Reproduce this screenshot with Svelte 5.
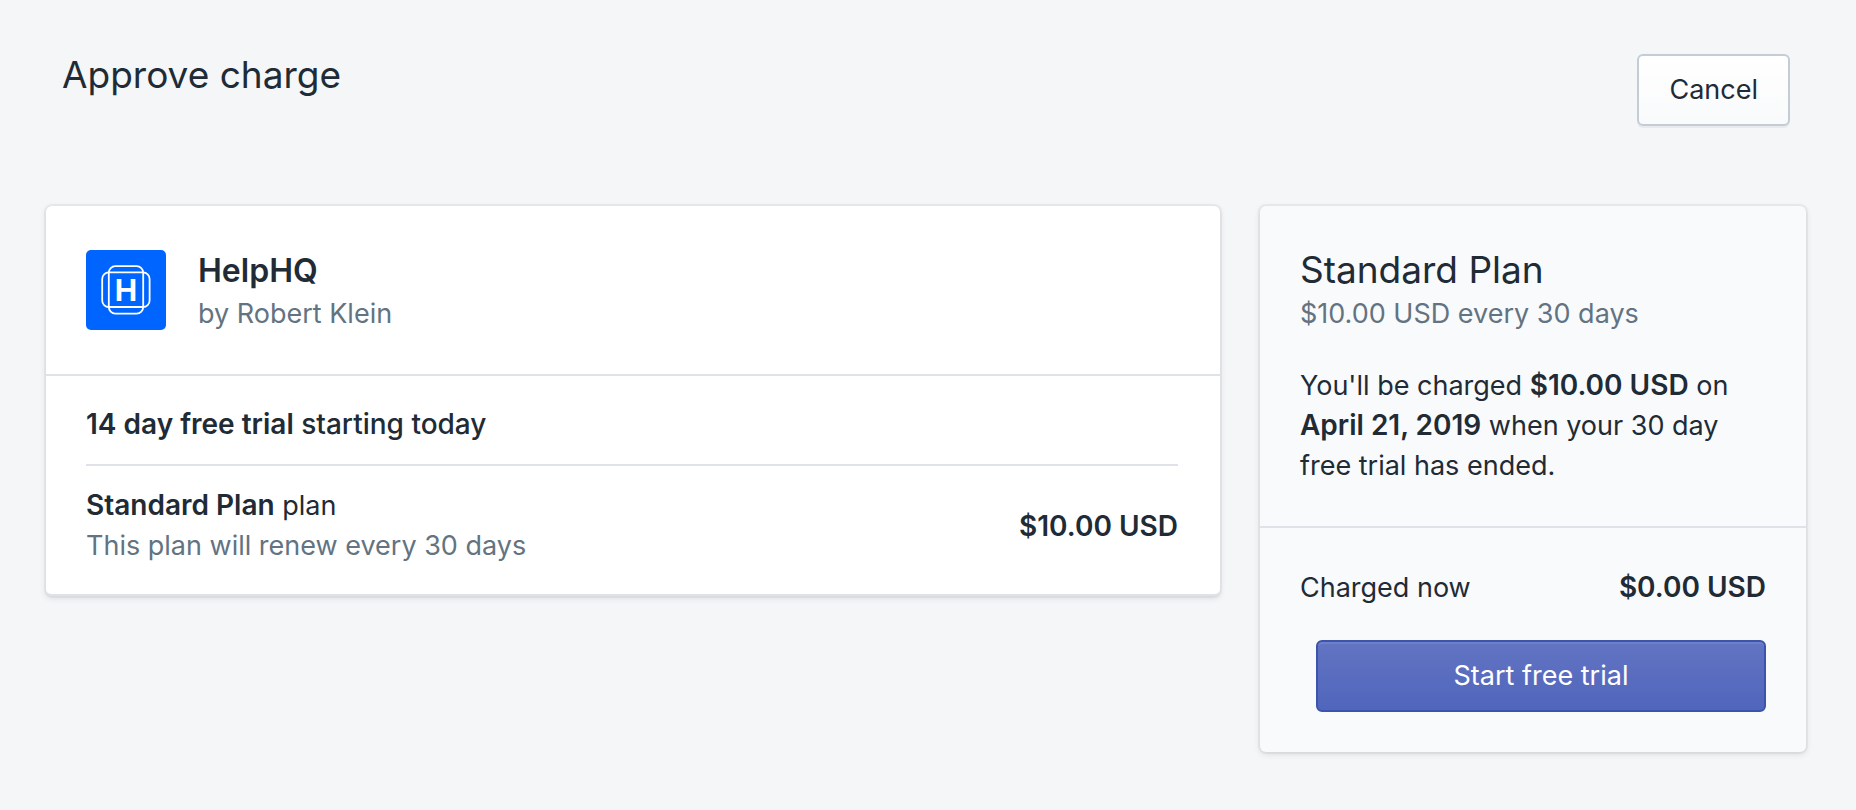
<script>
  const app = { name: 'HelpHQ', author: 'Robert Klein' };
  const plan = { name: 'Standard Plan', price: '$10.00 USD', days: 30 };
</script>

<main class="page">
  <header class="header">
    <h1 class="title">Approve charge</h1>
    <button type="button" class="button">Cancel</button>
  </header>

  <div class="layout">
    <section class="card primary">
      <div class="app">
        <svg class="logo" viewBox="0 0 80 80" aria-hidden="true">
          <rect width="80" height="80" rx="5" fill="#0064ff" />
          <g fill="none" stroke="#fff" stroke-width="1.8">
            <rect x="22.8" y="16.2" width="34.4" height="47.4" rx="6.5" />
            <rect x="16.2" y="22.4" width="47.4" height="34.6" rx="6.5" />
          </g>
          <text x="40" y="50.5" text-anchor="middle" fill="#fff">H</text>
        </svg>
        <div>
          <h2 class="app-name">{app.name}</h2>
          <p class="subdued">by {app.author}</p>
        </div>
      </div>
      <div class="details">
        <p class="trial"><strong>14 day free trial</strong> starting today</p>
        <div class="plan">
          <div>
            <p><strong>{plan.name}</strong> plan</p>
            <p class="subdued">This plan will renew every {plan.days} days</p>
          </div>
          <strong>{plan.price}</strong>
        </div>
      </div>
    </section>

    <aside class="card summary">
      <div class="section">
        <h2 class="title plan-name">{plan.name}</h2>
        <p class="subdued">{plan.price} every {plan.days} days</p>
        <p class="notice">
          You'll be charged <strong>{plan.price}</strong> on <strong>April 21, 2019</strong> when your {plan.days} day free trial has ended.
        </p>
      </div>
      <div class="section checkout">
        <div class="total">
          <span>Charged now</span>
          <strong>$0.00 USD</strong>
        </div>
        <button type="button" class="button start">Start free trial</button>
      </div>
    </aside>
  </div>
</main>

<style>
  :global(body) {
    margin: 0;
    background: #f4f6f8;
  }
  .page {
    padding: 54px 50px 58px 46px;
    color: #212b36;
    font: 400 27px/40px Inter, Roboto, sans-serif;
  }
  h1, h2, p {
    margin: 0;
  }
  strong {
    font-size: 28px;
    font-weight: 600;
    line-height: 28px;
  }
  .subdued {
    color: #637381;
  }
  .header {
    display: flex;
    justify-content: space-between;
    align-items: flex-start;
    padding: 0 16px;
    margin-bottom: 80px;
  }
  .title {
    font-size: 37px;
    font-weight: 400;
    line-height: 42px;
  }
  .button {
    box-sizing: border-box;
    height: 72px;
    padding: 0 30px;
    border: 2px solid #c4cdd5;
    border-radius: 6px;
    background: linear-gradient(to bottom, #fff, #f9fafb);
    box-shadow: 0 2px 0 rgba(22, 29, 37, 0.05);
    color: inherit;
    font: inherit;
    cursor: pointer;
  }
  .layout {
    display: grid;
    grid-template-columns: 43fr 20fr;
    gap: 40px;
    align-items: start;
  }
  .card {
    overflow: hidden;
    border-radius: 6px;
    background: #fff;
    box-shadow: 0 0 0 2px rgba(63, 63, 68, 0.05), 0 2px 6px rgba(63, 63, 68, 0.15);
  }
  .primary {
    border-bottom: 2px solid #dfe3e8;
  }
  .app {
    display: flex;
    gap: 32px;
    padding: 44px 40px 40px;
    border-bottom: 2px solid #dfe3e8;
  }
  .logo {
    flex: none;
    width: 80px;
    height: 80px;
  }
  .logo text {
    font: 700 30px Inter, sans-serif;
  }
  .app-name {
    margin-bottom: 2px;
    font-size: 32px;
    font-weight: 600;
    line-height: 42px;
  }
  .details {
    padding: 28px 42px 28px 40px;
  }
  .trial {
    padding-bottom: 20px;
    border-bottom: 2px solid #dfe3e8;
    font-size: 28px;
    font-weight: 500;
  }
  .plan {
    display: flex;
    justify-content: space-between;
    align-items: center;
    padding-top: 20px;
  }
  .summary {
    background: #f9fafc;
  }
  .section {
    padding: 40px;
  }
  .plan-name {
    line-height: 48px;
  }
  .notice {
    margin-top: 32px;
  }
  .checkout {
    display: grid;
    gap: 32px;
    border-top: 2px solid #dfe3e8;
  }
  .total {
    display: flex;
    justify-content: space-between;
    align-items: baseline;
  }
  .start {
    margin-left: 16px;
    border-color: #3c54ac;
    background: linear-gradient(to bottom, #6274c2, #5065bc);
    box-shadow: inset 0 2px 0 #6e80c8;
    color: #fff;
  }
</style>
